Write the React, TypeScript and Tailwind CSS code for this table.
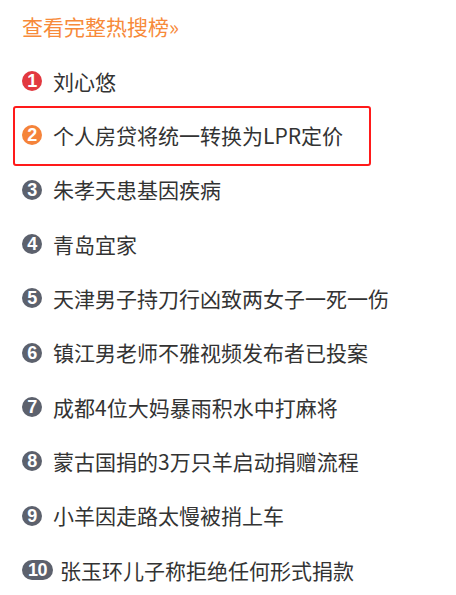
import React from "react";

const items = [
  "刘心悠",
  "个人房贷将统一转换为LPR定价",
  "朱孝天患基因疾病",
  "青岛宜家",
  "天津男子持刀行凶致两女子一死一伤",
  "镇江男老师不雅视频发布者已投案",
  "成都4位大妈暴雨积水中打麻将",
  "蒙古国捐的3万只羊启动捐赠流程",
  "小羊因走路太慢被捎上车",
  "张玉环儿子称拒绝任何形式捐款",
];

const badgeBase =
  "flex h-[20px] shrink-0 items-center justify-center rounded-full text-[18px] font-bold leading-none text-white font-['Liberation_Sans',Arial,sans-serif] tracking-[-0.5px]";

function Badge({ n }: { n: number }) {
  const bg = n === 1 ? "bg-[#e2383f]" : n === 2 ? "bg-[#f5833a]" : "bg-[#5c616d]";
  const w = n === 10 ? "w-[31px]" : "w-[20px]";
  return <span className={badgeBase + " " + w + " " + bg}>{n}</span>;
}

export default function App() {
  return (
    <div className="min-h-[595px] w-[456px] bg-white pt-[16px] font-['Noto_Sans_CJK_SC','Noto_Sans',sans-serif]">
      <div className="pl-[22px] text-[21px] leading-[21px] text-[#f78a3a]">查看完整热搜榜»</div>
      <ul className="mt-[17px]">
        {items.map((t, i) => (
          <li key={i} className="relative flex h-[54.33px] items-center pl-[22px]">
            {i === 1 && (
              <div className="pointer-events-none absolute left-[13px] top-[-2px] h-[60px] w-[358px] rounded-[3px] border-[2.5px] border-[#ff1a1a]" />
            )}
            <Badge n={i + 1} />
            <span className={(i === 9 ? "ml-[7px]" : "ml-[11px]") + " text-[21px] leading-none text-[#333333]"}>
              {t}
            </span>
          </li>
        ))}
      </ul>
    </div>
  );
}
